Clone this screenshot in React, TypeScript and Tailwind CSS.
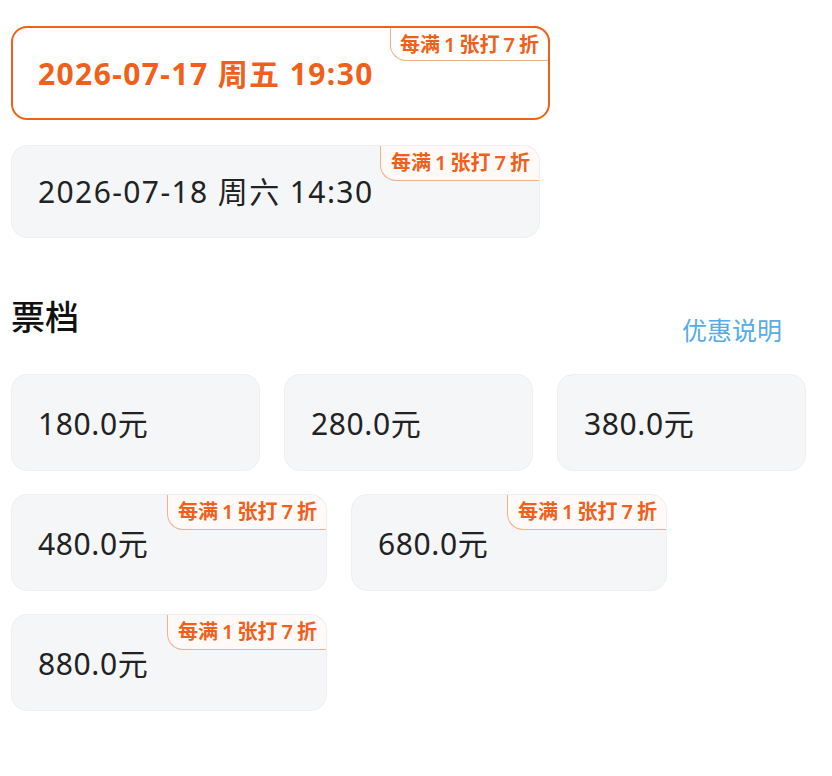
const FONT = { fontFamily: '"Noto Sans", "Noto Sans CJK SC", sans-serif' };

function BadgeText() {
  return (
    <>
      每满<span className="mx-[4px]">1</span>张打<span className="mx-[4px]">7</span>折
    </>
  );
}

function Badge() {
  return (
    <div className="absolute right-0 top-0 flex h-[35px] items-center rounded-tr-[16px] rounded-bl-[16px] border-b border-l border-[#f5b08a] bg-[#fffaf7] pl-[10px] pr-[9px] text-[20px] font-semibold leading-none text-[#f0601a]">
      <BadgeText />
    </div>
  );
}

type Session = { label: string; selected?: boolean };

const sessions: Session[] = [
  { label: "2026-07-17 周五 19:30", selected: true },
  { label: "2026-07-18 周六 14:30" },
];

type Tier = { price: string; discount?: boolean };

const tiers: Tier[] = [
  { price: "180.0" },
  { price: "280.0" },
  { price: "380.0" },
  { price: "480.0", discount: true },
  { price: "680.0", discount: true },
  { price: "880.0", discount: true },
];

export default function App() {
  return (
    <div className="min-h-[776px] w-[832px] bg-white pl-[11px] pt-[26px]" style={FONT}>
      {/* sessions */}
      <div className="flex flex-col gap-[25px]">
        {sessions.map((s) =>
          s.selected ? (
            <div
              key={s.label}
              className="relative flex h-[94px] w-[539px] items-center rounded-[16px] border-2 border-[#f0601a] bg-white pl-[25px]"
            >
              <span className="text-[30px] font-bold tracking-[1.4px] text-[#f0601a]">{s.label}</span>
              <div className="absolute -right-[2px] -top-[2px] flex h-[35px] items-center rounded-tr-[16px] rounded-bl-[16px] border-2 border-t-[#f0601a] border-r-[#f0601a] border-b-0 border-l-0 bg-white pl-[10px] pr-[9px] text-[20px] font-semibold leading-none text-[#f0601a]">
                <div className="absolute inset-0 rounded-bl-[16px] border-b border-l border-[#f5b08a]" />
                <BadgeText />
              </div>
            </div>
          ) : (
            <div
              key={s.label}
              className="relative flex h-[93px] w-[529px] items-center rounded-[16px] border border-[#eeeff2] bg-[#f5f6f8] pl-[26px]"
            >
              <span className="text-[30px] tracking-[1.4px] text-[#222222]">{s.label}</span>
              <Badge />
            </div>
          )
        )}
      </div>

      {/* header */}
      <div className="mt-[58px] flex w-[771px] items-end justify-between">
        <h2 className="text-[34px] font-medium leading-[42px] text-[#111111]">票档</h2>
        <span className="mb-[-8px] text-[25px] leading-[32px] text-[#56ace6]">优惠说明</span>
      </div>

      {/* tiers */}
      <div className="mt-[36px] flex w-[800px] flex-wrap gap-x-[24px] gap-y-[23px]">
        {tiers.map((t) => (
          <div
            key={t.price}
            className={`relative flex h-[97px] items-center rounded-[16px] border border-[#eeeff2] bg-[#f5f6f8] pl-[26px] ${
              t.discount ? "w-[316px]" : "w-[249px]"
            }`}
          >
            <span className="text-[30px] tracking-[0.6px] text-[#222222]">
              {t.price}
              <span style={{ fontFamily: '"Noto Sans CJK SC", sans-serif' }}>元</span>
            </span>
            {t.discount && <Badge />}
          </div>
        ))}
      </div>
    </div>
  );
}
